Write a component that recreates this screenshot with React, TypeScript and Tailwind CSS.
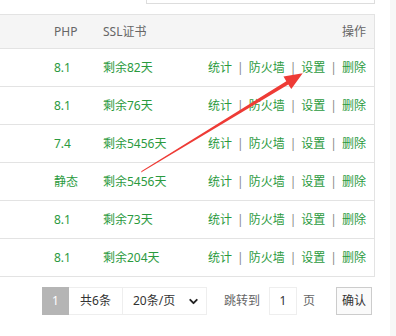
import { ChevronDown } from 'lucide-react';

const rows = [
  { php: '8.1', ssl: '剩余82天' },
  { php: '8.1', ssl: '剩余76天' },
  { php: '7.4', ssl: '剩余5456天' },
  { php: '静态', ssl: '剩余5456天' },
  { php: '8.1', ssl: '剩余73天' },
  { php: '8.1', ssl: '剩余204天' },
];

const actions = ['统计', '防火墙', '设置', '删除'];

const Arrow = () => (
  <svg className="absolute left-0 top-0 pointer-events-none" width="396" height="336" viewBox="0 0 396 336">
    <polygon
      points="141,172.5 288.3,84.4 291.3,89 302.7,73.3 283.5,76.5 286.3,81.2 141.6,171"
      fill="#ee3b36"
    />
  </svg>
);

export default function App() {
  return (
    <div
      className="relative w-[396px] h-[336px] overflow-hidden bg-white flex text-[12px]"
      style={{ fontFamily: '"Noto Sans", "Noto Sans CJK SC", sans-serif' }}
    >
      <div className="w-[390px] flex flex-col">
        <div className="ml-[146px] w-[229px] h-[4px] border-x border-b border-[#ddd]" />

        <div className="mt-[10px] w-[375px] border-t border-r border-b border-[#e3e3e3]">
          <div className="h-[33px] bg-[#f5f5f5] flex items-center text-[#666]">
            <div className="w-[54px]" />
            <div className="w-[49px]">PHP</div>
            <div className="flex-1">SSL证书</div>
            <div className="pr-[8px]">操作</div>
          </div>
          {rows.map((r, i) => (
            <div key={i} className="h-[38px] border-t border-[#e3e3e3] flex items-center text-[#2b9a3e]">
              <div className="w-[54px]" />
              <div className="w-[49px]">{r.php}</div>
              <div className="flex-1">{r.ssl}</div>
              <div className="pr-[8px] flex items-center">
                {actions.map((a, j) => (
                  <span key={a} className="flex items-center">
                    {j > 0 && <span className="mx-[5px] text-[#888]">|</span>}
                    <span>{a}</span>
                  </span>
                ))}
              </div>
            </div>
          ))}
        </div>

        <div className="mt-[10px] ml-[42px] flex items-center text-[#333]">
          <div className="w-[27px] h-[28px] bg-[#b5b5b5] text-white flex items-center justify-center">1</div>
          <div className="w-[54px] h-[28px] border border-l-0 border-[#eee] flex items-center justify-center">共6条</div>
          <div className="w-[84px] h-[28px] border border-l-0 border-[#eee] flex items-center justify-between pl-[10px] pr-[6px]">
            <span>20条/页</span>
            <ChevronDown size={13} strokeWidth={3.5} className="text-[#222]" />
          </div>
          <span className="ml-[17px] text-[#666]">跳转到</span>
          <div className="ml-[9px] w-[28px] h-[28px] border border-[#eee] flex items-center justify-center">1</div>
          <span className="ml-[6px] text-[#666]">页</span>
          <div className="ml-[21px] w-[36px] h-[28px] border border-[#ccc] bg-[#fafafa] flex items-center justify-center">确认</div>
        </div>
      </div>
      <div className="flex-1 bg-[#f7f7f7]" />
      <Arrow />
    </div>
  );
}
